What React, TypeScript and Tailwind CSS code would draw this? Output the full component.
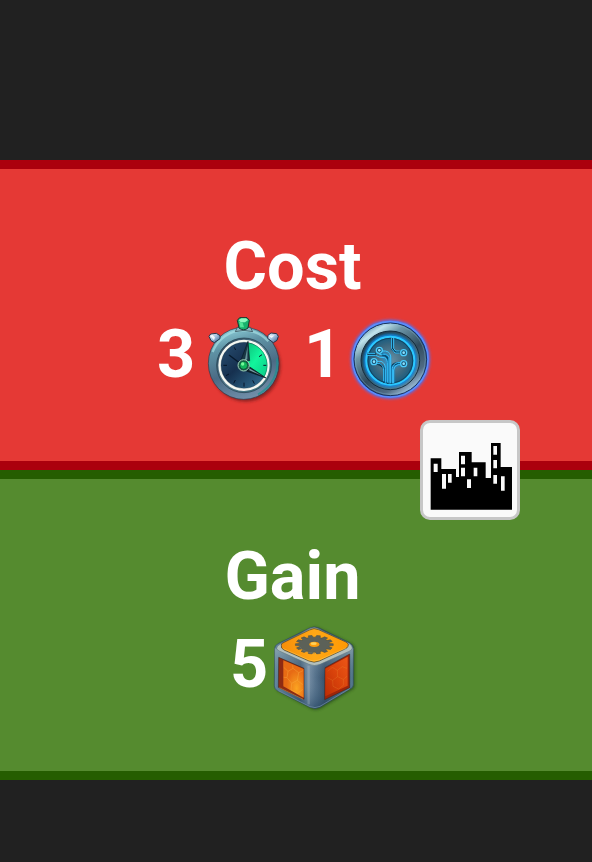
import React from "react";

function Stopwatch() {
  return (
    <svg viewBox="0 0 270 300" className="h-[100px] w-[90px] shrink-0">
      <defs>
        <linearGradient id="swBody" x1="0.3" y1="0" x2="0.6" y2="1">
          <stop offset="0" stopColor="#8fd0da" />
          <stop offset="0.25" stopColor="#5f93a5" />
          <stop offset="0.6" stopColor="#4b6b85" />
          <stop offset="1" stopColor="#7391ab" />
        </linearGradient>
        <linearGradient id="swInner" x1="0" y1="0" x2="1" y2="1">
          <stop offset="0" stopColor="#243e52" />
          <stop offset="0.5" stopColor="#5a7f92" />
          <stop offset="1" stopColor="#2e6a72" />
        </linearGradient>
        <linearGradient id="swFace" x1="0" y1="0" x2="1" y2="1">
          <stop offset="0" stopColor="#2a5275" />
          <stop offset="0.45" stopColor="#16304f" />
          <stop offset="1" stopColor="#34789b" />
        </linearGradient>
        <linearGradient id="swGreen" x1="0" y1="0" x2="1" y2="1">
          <stop offset="0" stopColor="#0cb874" />
          <stop offset="0.5" stopColor="#12f59c" />
          <stop offset="1" stopColor="#0ccb88" />
        </linearGradient>
        <linearGradient id="swKnob" x1="0" y1="0" x2="1" y2="1">
          <stop offset="0" stopColor="#f4f9ff" />
          <stop offset="0.5" stopColor="#9dbbdc" />
          <stop offset="1" stopColor="#34577f" />
        </linearGradient>
        <filter id="swBlur" x="-20%" y="-20%" width="140%" height="140%">
          <feGaussianBlur stdDeviation="5" />
        </filter>
      </defs>
      <ellipse cx="137" cy="168" rx="105" ry="107" fill="#611918" opacity="0.65" filter="url(#swBlur)" />
      <ellipse cx="131" cy="160" rx="106" ry="108" fill="url(#swBody)" stroke="#253d4e" strokeWidth="2" />
      <path d="M38 126 A100 102 0 0 1 205 94" fill="none" stroke="#a9e2e7" strokeWidth="7" opacity="0.65" />
      <path d="M231 145 A100 104 0 0 1 174 253" fill="none" stroke="#1c928e" strokeWidth="6" opacity="0.7" />
      <path d="M112 52 H151 L158 65 Q131 57 106 65 Z" fill="#8bb8c1" stroke="#263945" strokeWidth="2" />
      <path d="M112 31 L119 23 H141 L148 31 L144 54 Q131 65 117 54 Z" fill="#18b26d" stroke="#17362e" strokeWidth="3" />
      <path d="M116 30 L124 25 H138 L144 30 L135 37 H122 Z" fill="#8ff9bf" />
      <path d="M117 35 L121 52 H132 L128 38 Z" fill="#4fe597" />
      <path d="M27 79 L32 72 L49 70 L60 77 L60 86 L43 98 L33 92 Z" fill="url(#swKnob)" stroke="#22364d" strokeWidth="3" />
      <path d="M235 79 L230 71 L213 69 L204 76 L203 85 L220 98 L231 91 Z" fill="url(#swKnob)" stroke="#22364d" strokeWidth="3" />
      <path d="M31 78 L37 74 L45 82 L42 91 Z M206 77 L224 76 L215 84 Z" fill="#fff" opacity="0.8" />
      <circle cx="132" cy="166" r="82" fill="url(#swInner)" stroke="#1e3b4a" strokeWidth="2" />
      <circle cx="132" cy="166" r="73" fill="url(#swFace)" stroke="#f6f8f2" strokeWidth="8" />
      <path d="M132 166 L143 98 A69 69 0 0 1 193 201 Z" fill="url(#swGreen)" />
      <circle cx="132" cy="166" r="69" fill="none" stroke="#102b38" strokeWidth="1.5" opacity="0.6" />
      <path d="M70 166 H81 M78 197 L87 192 M101 220 L106 210 M132 230 V218 M163 221 L158 211 M186 134 L177 140 M190 166 H199 M103 112 L107 120" stroke="#061528" strokeWidth="3" />
      <path d="M87 135 L116 157" stroke="#07192d" strokeWidth="4" />
      <path d="M123 150 L144 94 L149 152 Z" fill="#193744" stroke="#071a25" strokeWidth="2" />
      <path d="M143 108 L142 148 L134 152 Z" fill="#67959b" />
      <path d="M145 168 L198 204 L139 183 Z" fill="#10212b" stroke="#071820" strokeWidth="2" />
      <path d="M148 175 L187 198 L148 181 Z" fill="#769da4" />
      <circle cx="131" cy="166" r="17" fill="#275f51" stroke="#9ed3b5" strokeWidth="3" />
      <circle cx="131" cy="166" r="12" fill="#12b65a" stroke="#073a29" strokeWidth="2" />
      <circle cx="128" cy="162" r="5" fill="#75f99a" />
    </svg>
  );
}

function CircuitCoin() {
  return (
    <svg viewBox="0 0 270 300" className="h-[100px] w-[90px] shrink-0">
      <defs>
        <linearGradient id="coinRim" x1="0.15" y1="0" x2="0.85" y2="1">
          <stop offset="0" stopColor="#4b778c" />
          <stop offset="0.15" stopColor="#c0e4ed" />
          <stop offset="0.28" stopColor="#6d96a8" />
          <stop offset="0.55" stopColor="#304b5d" />
          <stop offset="0.78" stopColor="#4f6b84" />
          <stop offset="0.94" stopColor="#b0cfe8" />
          <stop offset="1" stopColor="#3c6086" />
        </linearGradient>
        <linearGradient id="coinBevel" x1="0" y1="0" x2="1" y2="1">
          <stop offset="0" stopColor="#1b3140" />
          <stop offset="0.5" stopColor="#375869" />
          <stop offset="1" stopColor="#7499ad" />
        </linearGradient>
        <radialGradient id="coinFace">
          <stop offset="0" stopColor="#6a91a4" />
          <stop offset="0.65" stopColor="#3d687f" />
          <stop offset="1" stopColor="#155b80" />
        </radialGradient>
        <filter id="coinGlow" x="-20%" y="-20%" width="140%" height="140%">
          <feGaussianBlur stdDeviation="4" />
        </filter>
        <filter id="lineGlow" x="-20%" y="-20%" width="140%" height="140%">
          <feGaussianBlur stdDeviation="3" />
        </filter>
      </defs>
      <circle cx="136" cy="148" r="114" fill="#345cfa" stroke="#4577ff" strokeWidth="9" filter="url(#coinGlow)" />
      <circle cx="136" cy="148" r="113" fill="none" stroke="#5c93ff" strokeWidth="5" opacity="0.85" />
      <circle cx="136" cy="148" r="109" fill="url(#coinRim)" stroke="#17345d" strokeWidth="3" />
      <circle cx="136" cy="148" r="105" fill="none" stroke="#7eb4d8" strokeWidth="2" opacity="0.6" />
      <circle cx="136" cy="151" r="88" fill="url(#coinBevel)" stroke="#142c3c" strokeWidth="3" />
      <circle cx="136" cy="152" r="74" fill="url(#coinFace)" stroke="#0a86dc" strokeWidth="12" filter="url(#lineGlow)" />
      <circle cx="136" cy="152" r="72" fill="url(#coinFace)" stroke="#2cc8ff" strokeWidth="6" />
      <circle cx="136" cy="152" r="67" fill="none" stroke="#0b3650" strokeWidth="2" />
      <path d="M67 132 H93 M142 84 V117 L151 126 H164 M118 218 V181 Q118 171 104 163 L94 160 M129 221 V150 Q129 135 115 135 L109 129 M139 221 V177 Q140 161 158 160 H166" fill="none" stroke="#082d45" strokeWidth="7" />
      <g fill="none" stroke="#0791e0" strokeWidth="8" opacity="0.65" filter="url(#lineGlow)">
        <path d="M123 218 V153 L110 137 M134 218 V140 L110 125 M144 218 V172 L168 160" />
      </g>
      <g fill="none" stroke="#38c4ff" strokeWidth="3">
        <path d="M67 130 H91 M67 136 H92 Q104 144 119 143 Q127 145 127 157 V218" />
        <path d="M140 84 V116 L150 129 H164 M146 84 V115 L152 123 H164" />
        <path d="M112 123 Q134 121 137 138 V220 M103 134 Q126 128 132 143 V220" />
        <path d="M96 154 H108 Q121 159 121 175 V218 M94 161 H105 Q116 166 116 180 V214" />
        <path d="M166 158 H157 Q143 162 142 175 V220 M166 164 H159 Q147 168 146 180 V219" />
      </g>
      <g fill="#164b6c" stroke="#4ccdfd" strokeWidth="4">
        <circle cx="103" cy="121" r="9" />
        <circle cx="176" cy="128" r="9" />
        <circle cx="87" cy="155" r="9" />
        <circle cx="176" cy="161" r="9" />
      </g>
      <g fill="#8be3ff">
        <circle cx="103" cy="121" r="4" />
        <circle cx="176" cy="128" r="4" />
        <circle cx="87" cy="155" r="4" />
        <circle cx="176" cy="161" r="4" />
      </g>
    </svg>
  );
}

// Outline of a foreshortened cog lying on the lid of the crate.
const cogPoints = Array.from({ length: 14 }, (_, i) => {
  const centre = (i * Math.PI * 2) / 14;
  return [
    [-0.16, 46],
    [-0.1, 57],
    [0.1, 57],
    [0.16, 46],
  ]
    .map(([offset, r]) => `${148 + Math.cos(centre + offset) * r},${80 + Math.sin(centre + offset) * r * 0.49}`)
    .join(" ");
}).join(" ");

function Crate() {
  return (
    <svg viewBox="0 6 300 294" className="h-[98px] w-[100px] shrink-0">
      <defs>
        <linearGradient id="crateBody" x1="0" y1="0" x2="1" y2="0">
          <stop offset="0" stopColor="#6488a0" />
          <stop offset="0.33" stopColor="#3f5c75" />
          <stop offset="0.43" stopColor="#7890a6" />
          <stop offset="0.52" stopColor="#56728c" />
          <stop offset="0.64" stopColor="#35506a" />
          <stop offset="1" stopColor="#55798e" />
        </linearGradient>
        <linearGradient id="crateShade" x1="0" y1="0" x2="0" y2="1">
          <stop offset="0" stopColor="#c4cfce" stopOpacity="0.4" />
          <stop offset="0.5" stopColor="#6a889e" stopOpacity="0" />
          <stop offset="1" stopColor="#163958" stopOpacity="0.5" />
        </linearGradient>
        <linearGradient id="crateLid" x1="0" y1="0" x2="1" y2="0">
          <stop offset="0" stopColor="#f68d09" />
          <stop offset="0.5" stopColor="#ffa817" />
          <stop offset="1" stopColor="#ff9802" />
        </linearGradient>
        <radialGradient id="paneL" cx="0.65" cy="0.75">
          <stop offset="0" stopColor="#fba421" />
          <stop offset="1" stopColor="#e76b14" />
        </radialGradient>
        <linearGradient id="paneR" x1="0" y1="1" x2="1" y2="0">
          <stop offset="0" stopColor="#bd2d05" />
          <stop offset="0.5" stopColor="#d9430b" />
          <stop offset="1" stopColor="#ee5717" />
        </linearGradient>
        <filter id="crateBlur" x="-20%" y="-20%" width="140%" height="140%">
          <feGaussianBlur stdDeviation="4" />
        </filter>
        <clipPath id="paneClip">
          <path d="M55 131 L115 155 V238 L55 206 Z M184 152 L247 119 V202 L184 234 Z" />
        </clipPath>
      </defs>
      <path d="M37 90 Q37 82 48 77 L138 31 Q150 25 163 31 L257 76 Q269 82 269 94 V203 Q269 211 259 216 L170 270 Q155 279 140 273 L43 221 Q34 216 34 207 Z" fill="#1c3c13" opacity="0.7" filter="url(#crateBlur)" />
      <path d="M29 91 Q29 82 41 76 L132 31 Q147 23 162 30 L253 74 Q265 80 265 92 V200 Q265 208 255 213 L166 267 Q150 275 135 268 L37 218 Q28 213 28 204 Z" fill="url(#crateBody)" stroke="#314b58" strokeWidth="2" />
      <path d="M29 91 L132 138 Q148 145 163 137 L265 90 V200 Q265 208 255 213 L166 267 Q150 275 135 268 L37 218 Q28 213 28 204 Z" fill="url(#crateShade)" />
      <path d="M35 91 Q35 84 45 79 L134 33 Q148 26 161 33 L251 76 Q262 82 262 90 Q261 97 250 101 L165 139 Q148 146 132 139 L43 99 Q35 95 35 91Z" fill="#b3c0bd" stroke="#58707a" strokeWidth="1.5" />
      <path d="M49 82 Q47 77 57 73 L133 36 Q147 28 161 35 L243 72 Q254 78 249 85 Q248 90 238 94 L163 129 Q147 136 132 129 L57 96 Q47 91 49 82 Z" fill="url(#crateLid)" stroke="#3b3b28" strokeWidth="2" />
      <path d="M55 92 L132 126 Q147 132 162 126 L243 90" fill="none" stroke="#ffd063" strokeWidth="2" opacity="0.65" />
      <polygon points={cogPoints} fill="#5c6158" stroke="#464c44" strokeWidth="1.5" />
      <path d="M103 86 Q119 105 150 106" fill="none" stroke="#788078" strokeWidth="2" opacity="0.7" />
      <ellipse cx="148" cy="79" rx="15" ry="8" fill="#ff9d0c" />
      <ellipse cx="146" cy="77" rx="9" ry="4" fill="#ffd15b" />
      <path d="M41 118 L117 151 V244 L40 208 Z" fill="#8f2b12" stroke="#33231f" strokeWidth="1.5" />
      <path d="M55 127 L116 153 V239 L55 205 Z" fill="url(#paneL)" />
      <path d="M180 149 L254 108 V209 L179 245 Z" fill="#9e2509" stroke="#34231f" strokeWidth="1.5" />
      <path d="M181 152 L248 116 V203 L181 235 Z" fill="url(#paneR)" />
      <g clipPath="url(#paneClip)" fill="none" stroke="#ffc04d" strokeWidth="2" opacity="0.45">
        <path d="M54 125 V146 L69 160 L84 151 L82 136 M84 151 L101 164 L114 158 M69 160 L66 179 L51 177 M66 179 L80 196 L97 187 L101 164 M80 196 L78 216 M97 187 L113 200 M78 216 L98 226 L113 214" />
        <path d="M188 160 L202 148 L217 157 L232 146 L246 151 M217 157 L218 176 L203 187 L187 179 M218 176 L235 184 L247 174 M235 184 V202 L221 213 L204 205 L203 187" opacity="0.5" />
      </g>
      <path d="M43 209 L115 244" stroke="#d9782f" strokeWidth="2" />
      <path d="M131 144 V259" stroke="#9fb0bd" strokeWidth="7" opacity="0.35" />
      <path d="M40 218 L135 266 Q150 272 165 265 L254 212" fill="none" stroke="#7894aa" strokeWidth="3" opacity="0.65" />
    </svg>
  );
}

function CityBadge() {
  return (
    <div className="absolute left-[420px] top-[420px] h-[100px] w-[100px] overflow-hidden rounded-[10px] border-[3px] border-[#c7c7c7] bg-[#fafafa]">
      <svg viewBox="24 24 282 282" className="h-[94px] w-[94px]">
        <path d="M47 130 H79 V162 H123 V186 H132 V111 H170 V142 H212 V189 H228 V84 H257 V156 H291 V284 H47 Z" fill="#000" />
        <path d="M56 146 h12 v25 h-12z M81 177 h12 v44 h-12z M99 177 h11 v26 h-11z M138 122 h12 v26 h-12z M138 158 h12 v26 h-12z M176 158 h11 v26 h-11z M156 193 h12 v26 h-12z M235 93 h11 v26 h-11z M235 135 h11 v25 h-11z M235 180 h11 v26 h-11z M258 184 h11 v43 h-11z" fill="#fafafa" />
      </svg>
    </div>
  );
}

export default function App() {
  return (
    <main className="relative h-[862px] w-[592px] overflow-hidden bg-[#212121] pt-40 font-['Roboto',sans-serif] text-[66.67px] font-bold leading-[88px] text-white">
      <section className="h-[310px] border-y-[9px] border-[#ab000d] bg-[#e53935] pt-[53px]">
        <h1 className="pr-[7px] text-center">Cost</h1>
        <div className="flex h-[88px] items-start justify-center">
          <span className="w-[43px]">3</span>
          <Stopwatch />
          <span className="ml-[14px] w-[41px]">1</span>
          <CircuitCoin />
        </div>
      </section>
      <section className="h-[310px] border-y-[9px] border-[#255d00] bg-[#558b2f] pt-[53px]">
        <h1 className="pr-[7px] text-center">Gain</h1>
        <div className="flex h-[88px] items-start justify-center pl-[3px]">
          <span className="w-[35px]">5</span>
          <Crate />
        </div>
      </section>
      <CityBadge />
    </main>
  );
}
